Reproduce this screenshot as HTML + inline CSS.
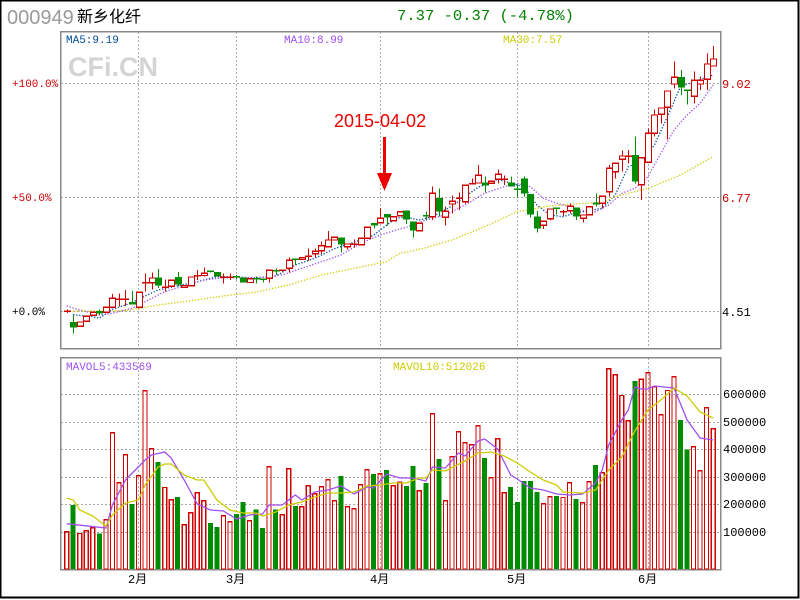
<!DOCTYPE html>
<html><head><meta charset="utf-8">
<style>
html,body{margin:0;padding:0;background:#fff;}
#wrap{position:relative;width:800px;height:600px;overflow:hidden;background:#fff;}
svg text{font-family:"Liberation Mono","Noto Sans CJK SC",monospace;}
</style></head>
<body><div id="wrap">
<svg id="s" width="800" height="600" xmlns="http://www.w3.org/2000/svg" shape-rendering="crispEdges">
<rect x="0.5" y="0.5" width="798" height="597" fill="none" stroke="#000" stroke-width="2"/>
<text x="7" y="24" font-size="20" fill="#999" style="font-family:'Liberation Sans',sans-serif">000949</text>
<text x="77" y="22" font-size="16" fill="#000" style="font-family:'Liberation Sans','Noto Sans CJK SC',sans-serif">新乡化纤</text>
<text x="397" y="20" font-size="15" fill="#008000" textLength="177" lengthAdjust="spacingAndGlyphs">7.37 -0.37 (-4.78%)</text>
<g id="grid" stroke="#aaa" stroke-dasharray="2,2" stroke-width="1"></g>
<text x="68" y="76" font-size="27" font-weight="bold" fill="#d4d4d4" style="font-family:'Liberation Sans',sans-serif">CFi.CN</text>
<rect x="60.5" y="31.5" width="660" height="317" fill="none" stroke="#888" stroke-width="1.5"/>
<rect x="60.5" y="357.5" width="660" height="212" fill="none" stroke="#888" stroke-width="1.5"/>
<text x="66" y="43" font-size="11" fill="#004c99">MA5:9.19</text>
<text x="284" y="43" font-size="11" fill="#a050f0">MA10:8.99</text>
<text x="503" y="43" font-size="11" fill="#cccc00">MA30:7.57</text>
<text x="66" y="370" font-size="11" fill="#a050f0">MAVOL5:433569</text>
<text x="393" y="370" font-size="11" fill="#cccc00">MAVOL10:512026</text>
<g font-size="11">
<text x="12" y="87" fill="#c00">+100.0%</text>
<text x="12" y="201" fill="#c00">+50.0%</text>
<text x="12" y="315" fill="#000">+0.0%</text>
<text x="722" y="88" fill="#c00" font-size="12">9.02</text>
<text x="722" y="202" fill="#c00" font-size="12">6.77</text>
<text x="722" y="316" fill="#000" font-size="12">4.51</text>
<text x="723" y="398" fill="#000" font-size="12">600000</text>
<text x="723" y="426" fill="#000" font-size="12">500000</text>
<text x="723" y="453" fill="#000" font-size="12">400000</text>
<text x="723" y="481" fill="#000" font-size="12">300000</text>
<text x="723" y="508" fill="#000" font-size="12">200000</text>
<text x="723" y="536" fill="#000" font-size="12">100000</text>
</g>
<g font-size="12" fill="#000">
<text x="128" y="583">2月</text><text x="226" y="583">3月</text><text x="370" y="583">4月</text><text x="507" y="583">5月</text><text x="638" y="583">6月</text>
</g>
<g id="vol"></g><g id="ma"></g><g id="cdl"></g>
<text x="334" y="127" font-size="18" fill="#e00" style="font-family:'Liberation Sans',sans-serif">2015-04-02</text>
<rect x="383" y="137" width="3" height="40" fill="#e00"/>
<polygon points="377,173 392,173 384.5,191" fill="#e00"/>
</svg>
<script>
var S=document.getElementById('s'),NS='http://www.w3.org/2000/svg';
function el(p,t,a){var e=document.createElementNS(NS,t);for(var k in a)e.setAttribute(k,a[k]);document.getElementById(p).appendChild(e);return e;}
function X(i){return 66.7+(i-1)*6.53;}
var g='grid';
[138,236,380,517,648].forEach(function(x){el(g,'line',{x1:x+.5,y1:32,x2:x+.5,y2:348});el(g,'line',{x1:x+.5,y1:358,x2:x+.5,y2:569});});
[83,197,311].forEach(function(y){el(g,'line',{x1:61,y1:y+.5,x2:720,y2:y+.5});});
[394,422,449,477,504,532].forEach(function(y){el(g,'line',{x1:61,y1:y+.5,x2:720,y2:y+.5});});
var R='#d00000',G='#008c00';
// volume: [zoomTop, color]
var vz=[[544,'R'],[465,'G'],[549,'R'],[541,'R'],[532,'R'],[551,'G'],[508,'R'],[247,'R'],[397,'R'],[313,'R'],[462,'G'],[376,'R'],[121,'R'],[295,'R'],[336,'G'],[411,'R'],[448,'R'],[441,'G'],[523,'R'],[487,'R'],[427,'R'],[451,'R'],[519,'G'],[531,'G'],[496,'R'],[514,'R'],[492,'G'],[456,'G'],[511,'R'],[478,'G'],[534,'G'],[349,'R'],[478,'G'],[493,'R'],[355,'R'],[468,'G'],[469,'R'],[406,'R'],[430,'R'],[409,'R'],[388,'R'],[451,'R'],[378,'G'],[469,'R'],[475,'R'],[403,'R'],[358,'R'],[372,'G'],[370,'R'],[360,'G'],[406,'R'],[395,'R'],[408,'G'],[348,'G'],[421,'R'],
[399,'G'],[190,'R'],[327,'G'],[451,'R'],[319,'R'],[244,'R'],[277,'R'],[283,'R'],[226,'R'],[324,'G'],[382,'R'],[265,'R'],[427,'R'],[411,'G'],[456,'G'],[393,'G'],[393,'G'],[426,'G'],[460,'R'],[439,'R'],[438,'G'],[441,'R'],[397,'R'],[447,'G'],[457,'R'],[394,'R'],[345,'G'],[367,'R'],[55,'R'],[73,'R'],[135,'R'],[211,'R'],[93,'G'],[86,'R'],[67,'R'],[109,'R'],[193,'R'],[120,'R'],[79,'R'],[210,'G'],[299,'G'],[289,'R'],[361,'R'],[172,'R'],[235,'R']];
vz.forEach(function(v,k){var x=X(k+1),t=350+v[0]/3;
 if(v[1]=='G')el('vol','rect',{x:(x-2.5).toFixed(1),y:t.toFixed(1),width:5,height:(569-t).toFixed(1),fill:G});
 else el('vol','rect',{x:(x-2).toFixed(1),y:(t+.5).toFixed(1),width:4,height:(568.5-t).toFixed(1),fill:'none',stroke:R,'stroke-width':1.2});});
function line(pts,col,dash){var d=pts.map(function(p){return X(p[0]).toFixed(1)+','+p[1].toFixed(1);}).join(' ');
 var a={points:d,fill:'none',stroke:col,'stroke-width':1.3,'shape-rendering':'auto'};if(dash)a['stroke-dasharray']='1.3,1.7';el('ma','polyline',a);}
line([[1,523.7],[7,528],[8,505],[10,480],[13,460],[14,455],[16,452],[17,458],[19,480],[21,504],[23,510],[25,511],[27,519],[29,515],[31,514],[32,505],[34,505],[36,495],[37,500],[39,492],[41,490],[43,486],[45,494],[47,487],[48,488],[50,474],[52,478],[54,478],[56,481],[57,467],[59,468],[61,453],[62,456],[64,441],[65,439],[67,449],[69,475],[70,479],[72,488],[74,490],[76,494],[78,495],[80,494],[82,483],[83,470],[84,445],[86,420],[87,410],[88,387],[89,389],[90,389],[91,386],[94,388],[96,420],[98,438],[100,440]],'#a050f0');
line([[1,498],[2,500],[3,510],[5,516],[7,526],[8,515],[10,503],[12,500],[13,485],[15,467],[16,464],[17,464],[19,475],[21,480],[22,480],[24,500],[26,510],[28,513],[30,513],[31,516],[33,512],[35,505],[37,502],[39,497],[41,493],[43,493],[45,492],[47,486],[49,485],[51,483],[53,483],[55,478],[56,478],[57,470],[59,471],[62,461],[64,453],[66,452],[68,456],[70,463],[72,472],[74,480],[76,485],[77,492],[80,493],[82,490],[83,480],[84,470],[86,457],[88,431],[90,410],[92,400],[94,388],[96,396],[98,412],[100,418]],'#cccc00');
function cv(a,off){return a.map(function(p){return [p[0],off+p[1]/3];});}
line(cv([[2,494],[5,500],[6,505],[8,478],[11,458],[13,438],[15,420],[18,407],[21,395],[24,380],[27,381],[30,384],[33,378],[36,345],[39,325],[42,296],[45,277],[48,256],[51,210],[52,203]],150).concat(cv([[53,592],[55,600],[57,590],[60,558],[62,530],[64,502],[67,478],[69,490],[71,500],[73,555],[75,585],[77,590],[79,578],[81,572],[83,565],[85,525],[87,440],[89,425],[91,375],[93,290],[95,200],[97,185],[100,165]],20)),'#004c99',1);
line(cv([[1,468],[3,480],[6,495],[8,490],[11,475],[13,455],[16,425],[19,408],[22,390],[25,383],[28,383],[31,382],[34,375],[37,355],[40,335],[43,315],[46,280],[49,255],[52,237]],150).concat(cv([[53,622],[56,600],[59,585],[62,555],[65,520],[68,500],[70,490],[72,500],[74,535],[76,550],[78,560],[80,572],[82,575],[84,555],[86,520],[88,505],[90,470],[92,400],[94,330],[96,285],[98,250],[100,195]],20)),'#a050f0',1);
line(cv([[1,483],[6,483],[10,482],[12,476],[15,465],[20,452],[25,438],[30,426],[35,405],[40,375],[45,355],[50,335],[52,310]],150).concat(cv([[53,697],[56,683],[60,660],[65,620],[70,575],[75,558],[80,550],[83,548],[85,530],[90,505],[95,465],[100,410]],20)),'#cccc00',1);
// candles: [i, top, bottom, wickTop, wickBottom, color] zoom coords
var c2=[[1,484,484,479,489,'R'],[2,516,532,497,550,'G'],[3,516,529,0,0,'R'],[4,499,514,0,0,'R'],[5,487,496,0,0,'R'],[6,483,490,478,495,'G'],[7,472,487,0,0,'R'],[8,445,472,432,0,'R'],[9,448,448,430,470,'R'],[10,448,448,420,468,'R'],[11,456,464,423,0,'G'],[12,427,472,0,0,'R'],[13,398,398,370,425,'R'],[14,384,398,368,418,'R'],[15,382,407,357,414,'G'],[16,411,415,388,425,'R'],[17,391,409,0,0,'R'],[18,381,404,366,410,'G'],[19,407,412,0,0,'R'],[20,381,407,0,0,'R'],[21,377,377,360,390,'R'],[22,370,377,352,380,'R'],[23,364,368,0,0,'G'],[24,366,379,0,0,'G'],[25,382,382,370,400,'R'],[26,381,381,370,390,'R'],[27,380,380,375,388,'G'],[28,383,398,0,0,'G'],[29,386,397,0,0,'R'],[30,386,386,380,400,'G'],[31,388,392,0,397,'G'],[32,361,385,0,398,'R'],[33,362,362,355,375,'G'],[34,361,364,0,0,'R'],[35,331,355,322,368,'R'],[36,327,331,0,345,'G'],[37,323,328,0,0,'R'],[38,319,322,295,333,'R'],[39,304,311,295,322,'R'],[40,287,302,275,312,'R'],[41,270,290,243,0,'R'],[42,262,270,0,0,'R'],[43,262,284,0,308,'G'],[44,282,290,0,298,'R'],[45,282,282,268,292,'R'],[46,265,284,0,0,'R'],[47,232,265,0,0,'R'],[48,219,227,0,236,'G'],[49,205,218,175,0,'R'],[50,192,203,0,227,'G'],[51,200,212,0,0,'R'],[52,185,197,0,0,'R']];
var c3=[[53,571,598,0,612,'G'],[54,604,632,0,652,'G'],[55,610,632,0,0,'R'],[56,587,587,575,600,'G'],[57,520,590,500,600,'R'],[58,534,575,505,590,'G'],[59,574,592,560,617,'R'],[60,544,552,526,580,'R'],[61,535,535,518,570,'R'],[62,496,545,0,550,'R'],[63,491,491,475,0,'R'],[64,466,489,435,0,'R'],[65,487,497,470,517,'G'],[66,484,490,0,0,'R'],[67,463,478,448,490,'R'],[68,478,478,467,495,'R'],[69,487,500,470,0,'G'],[70,508,508,490,533,'G'],[71,475,520,470,530,'G'],[72,522,584,0,592,'G'],[73,589,626,573,638,'G'],[74,604,616,0,627,'R'],[75,567,596,0,602,'R'],[76,564,568,0,583,'G'],[77,575,575,570,588,'R'],[78,559,572,550,580,'R'],[79,562,589,0,600,'G'],[80,585,595,0,607,'R'],[81,560,584,0,0,'R'],[82,548,553,520,560,'G'],[83,529,550,0,565,'R'],[84,445,515,435,530,'R'],[85,430,455,0,475,'R'],[86,408,418,392,455,'R'],[87,408,408,390,430,'R'],[88,405,485,350,490,'G'],[89,413,494,0,540,'R'],[90,340,427,325,0,'R'],[91,285,340,268,350,'R'],[92,264,283,0,310,'R'],[93,213,262,0,358,'R'],[94,172,192,125,205,'R'],[95,171,203,150,225,'G'],[96,210,214,0,253,'G'],[97,181,229,155,250,'R'],[98,181,192,170,210,'R'],[99,132,178,100,210,'R'],[100,117,138,78,0,'R']];
function drawC(arr,off){arr.forEach(function(c){var x=X(c[0]),t=off+c[1]/3,b=off+c[2]/3,wt=c[3]?off+c[3]/3:t,wb=c[4]?off+c[4]/3:b;var col=c[5]=='G'?G:R;
 var xc=Math.round(x)+.5;
 el('cdl','line',{x1:xc,y1:wt.toFixed(1),x2:xc,y2:wb.toFixed(1),stroke:col,'stroke-width':1.2});
 if(b-t<1.5){el('cdl','rect',{x:Math.round(x)-3,y:(t-0.6).toFixed(1),width:7,height:1.4,fill:col});return;}
 if(c[5]=='G')el('cdl','rect',{x:Math.round(x)-3,y:t.toFixed(1),width:7,height:(b-t).toFixed(1),fill:G});
 else el('cdl','rect',{x:Math.round(x)-2.5,y:t.toFixed(1),width:6,height:(b-t).toFixed(1),fill:'#fff',stroke:R,'stroke-width':1.3});});}
drawC(c2,150);drawC(c3,20);
</script>
</div></body></html>
